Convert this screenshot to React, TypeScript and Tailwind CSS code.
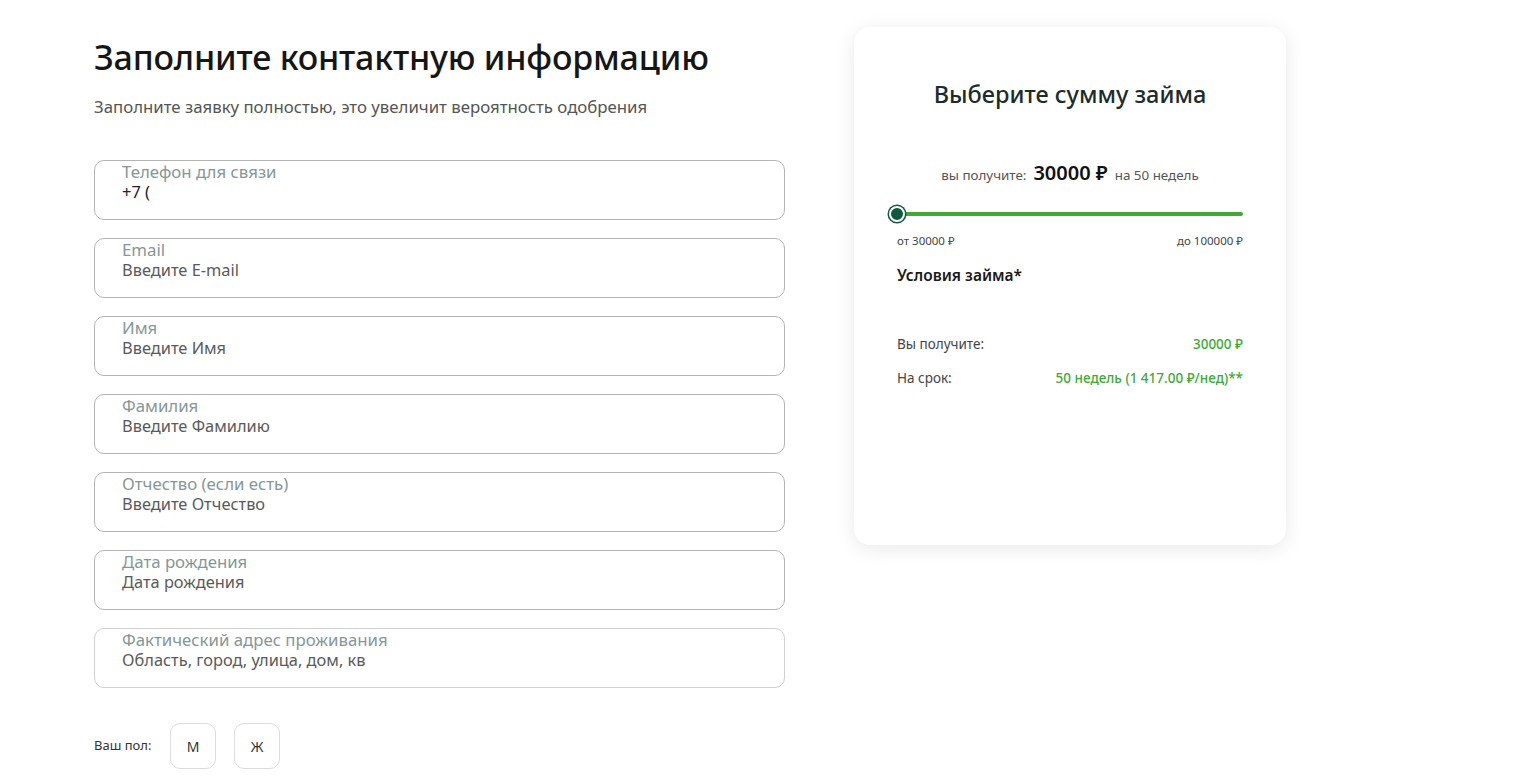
import React from 'react'

const fields = [
  { label: 'Телефон для связи', value: '+7 (', filled: true },
  { label: 'Email', value: 'Введите E-mail' },
  { label: 'Имя', value: 'Введите Имя' },
  { label: 'Фамилия', value: 'Введите Фамилию' },
  { label: 'Отчество (если есть)', value: 'Введите Отчество' },
  { label: 'Дата рождения', value: 'Дата рождения' },
  { label: 'Фактический адрес проживания', value: 'Область, город, улица, дом, кв', light: true },
]

const Field: React.FC<{ label: string; value: string; filled?: boolean; light?: boolean }> = ({ label, value, filled, light }) => (
  <div
    className={`h-[60px] rounded-[10px] border ${light ? 'border-[#d0d0d0]' : 'border-[#b4b4b4]'} pl-[27px] pt-[1px] flex flex-col`}
  >
    <span className="text-[16.8px] leading-[20px] text-[#869797]">{label}</span>
    <span className={`text-[16.4px] leading-[20px] ${filled ? 'text-[#222]' : 'text-[#5a5a5a]'}`}>{value}</span>
  </div>
)

export default function App() {
  return (
    <div className="min-h-screen bg-white font-['Noto_Sans',sans-serif] text-[#1a1a1a]">
      <div className="flex pl-[94px] pt-[27px] gap-[69px]">
        {/* left form */}
        <div className="w-[691px] pt-[8px]">
          <h1 className="text-[34px] leading-[44px] font-medium tracking-[-0.2px] text-[#161616]">Заполните контактную информацию</h1>
          <p className="mt-[18px] text-[16.8px] leading-[20px] text-[#555]">
            Заполните заявку полностью, это увеличит вероятность одобрения
          </p>
          <div className="mt-[43px] flex flex-col gap-[18px]">
            {fields.map((f) => (
              <Field key={f.label} {...f} />
            ))}
          </div>
          <div className="mt-[35px] flex items-center">
            <span className="text-[13px] text-[#333] w-[76px]">Ваш пол:</span>
            <button className="w-[46px] h-[46px] rounded-[10px] border border-[#dcdcdc] text-[14px] text-[#333]">М</button>
            <button className="ml-[18px] w-[46px] h-[46px] rounded-[10px] border border-[#dcdcdc] text-[14px] text-[#333]">Ж</button>
          </div>
        </div>

        {/* loan card */}
        <div className="w-[432px] h-[518px] rounded-[16px] bg-white shadow-[0_4px_20px_rgba(0,0,0,0.09)] px-[43px] pt-[50px]">
          <h2 className="text-center text-[23.5px] leading-[34px] font-medium text-[#1d2b2b]">Выберите сумму займа</h2>
          <div className="mt-[47px] flex items-baseline justify-center gap-[6px] text-[#555]">
            <span className="text-[13.4px]">вы получите:</span>
            <span className="text-[20px] font-semibold text-[#111] ml-[1px]">30000 ₽</span>
            <span className="text-[13.4px] ml-[1px]">на 50 недель</span>
          </div>
          <div className="relative mt-[18px] h-[16px] flex items-center">
            <div className="w-full h-[4px] rounded-full bg-[#3daa35]" />
            <div className="absolute left-[-8px] top-0 w-[16px] h-[16px] rounded-full bg-[#0e5a3e] border-[2px] border-white ring-[1.5px] ring-[#0e5a3e]" />
          </div>
          <div className="mt-[10px] flex justify-between text-[11.5px] text-[#444]">
            <span>от 30000 ₽</span>
            <span>до 100000 ₽</span>
          </div>
          <h3 className="mt-[15px] text-[15.5px] font-semibold text-[#1a1a1a]">Условия займа*</h3>
          <div className="mt-[46px] flex justify-between text-[13.5px]">
            <span className="text-[#444]">Вы получите:</span>
            <span className="text-[#3daa35] font-medium">30000 ₽</span>
          </div>
          <div className="mt-[14px] flex justify-between text-[13.5px]">
            <span className="text-[#444]">На срок:</span>
            <span className="text-[#3daa35] font-medium">50 недель (1 417.00 ₽/нед)**</span>
          </div>
        </div>
      </div>
    </div>
  )
}
